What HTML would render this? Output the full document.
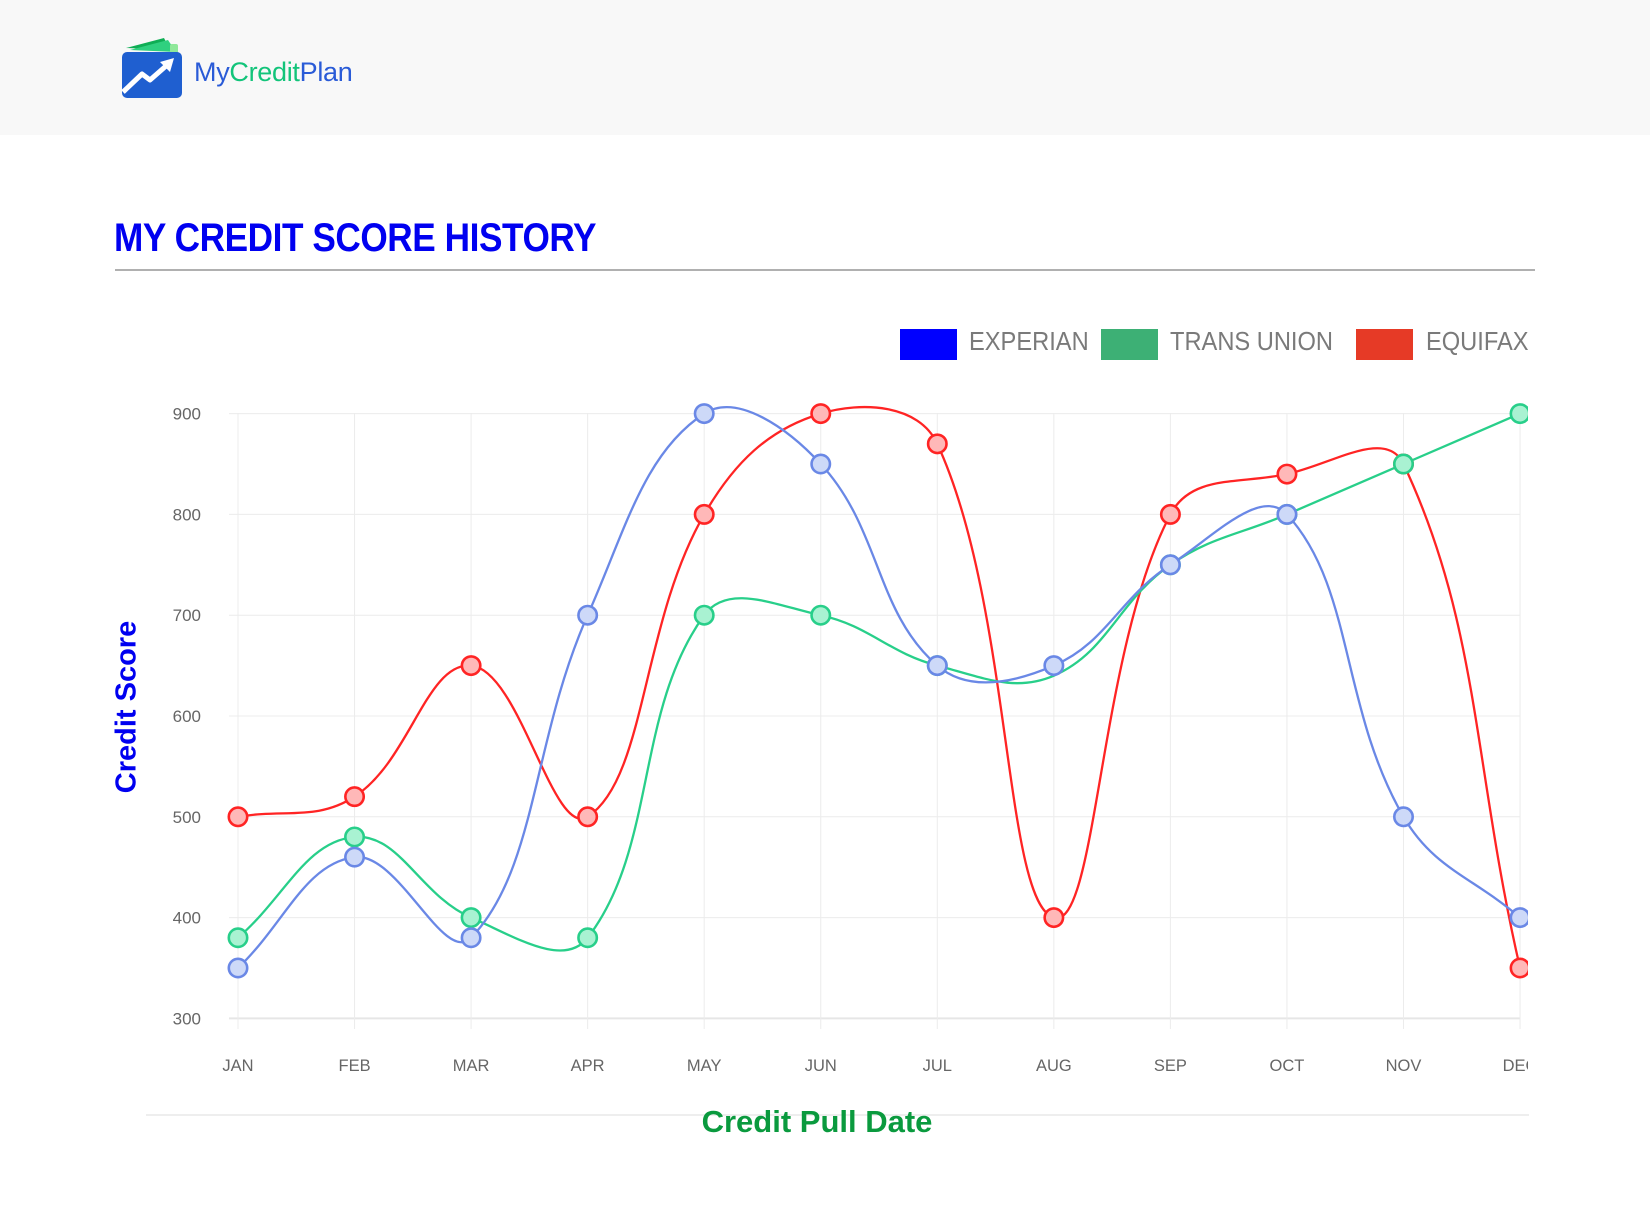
<!DOCTYPE html>
<html><head><meta charset="utf-8"><style>
html,body{margin:0;padding:0;background:#fff;width:1650px;height:1225px;overflow:hidden;font-family:"Liberation Sans",sans-serif}
.hdr{position:absolute;left:0;top:0;width:1650px;height:135px;background:#f8f8f8}
.logo-t{position:absolute;left:194px;top:57px;font-size:27px;color:#2a5bd7;letter-spacing:-0.3px}
.logo-t b{font-weight:normal;color:#12c47a}
.title{position:absolute;left:114px;top:216px;font-size:40px;font-weight:bold;color:#0000f0;letter-spacing:-0.5px;transform-origin:0 0;transform:scaleX(0.88)}
.rule{position:absolute;left:115px;top:269px;width:1420px;height:2px;background:#b0b0b0}
.leg{position:absolute;top:329px;height:31px}
.lt{position:absolute;top:326px;font-size:26px;color:#7a7a7a;transform-origin:0 0;transform:scaleX(0.91)}
.ylab{position:absolute;left:127px;top:707px;transform:translate(-50%,-50%) rotate(-90deg);font-size:29px;font-weight:bold;color:#0000f0;white-space:nowrap}
.xlab{position:absolute;left:817px;top:1122px;transform:translate(-50%,-50%);font-size:31px;font-weight:bold;color:#0a9a3e;white-space:nowrap}
.sep{position:absolute;left:146px;top:1114px;width:1383px;height:2px;background:#eee}
</style></head><body>
<div class="hdr"></div>
<svg style="position:absolute;left:120px;top:36px" width="66" height="64" viewBox="0 0 66 64">
<path d="M6 12 L44 2 L50 14 Z" fill="#0fae55"/>
<path d="M10 14 L48 4 L56 16 Z" fill="#2fd07f"/>
<rect x="50" y="8" width="8" height="12" rx="2" fill="#8fe89a"/>
<rect x="2" y="16" width="60" height="46" rx="5" fill="#1f5fd0"/>
<path d="M3 56 L22 38 L30 44 L46 30" stroke="#fff" stroke-width="5" fill="none" stroke-linejoin="round"/>
<path d="M40 26 L54 22 L50 36 Z" fill="#fff"/>
</svg>
<div class="logo-t">My<b>Credit</b>Plan</div>
<div class="title">MY CREDIT SCORE HISTORY</div>
<div class="rule"></div>
<div class="leg" style="left:900px;width:57px;background:#0000ff"></div>
<div class="lt" style="left:969px">EXPERIAN</div>
<div class="leg" style="left:1101px;width:57px;background:#3db075"></div>
<div class="lt" style="left:1170px">TRANS UNION</div>
<div class="leg" style="left:1356px;width:57px;background:#e63a26"></div>
<div class="lt" style="left:1426px">EQUIFAX</div>
<div class="ylab">Credit Score</div>
<svg id="ch" style="position:absolute;left:0;top:0" width="1528" height="1100"></svg>
<div class="sep"></div>
<div class="xlab">Credit Pull Date</div>
<script>
var svg=document.getElementById('ch'),h='';
var x0=238,dx=116.55,y900=413.6,per=100.8;
function X(i){return x0+i*dx}function Y(v){return y900+(900-v)/100*per}
for(var v=300;v<=900;v+=100){h+='<line x1="229" x2="1520" y1="'+Y(v)+'" y2="'+Y(v)+'" stroke="'+(v==300?'#e6e6e6':'#ececec')+'" stroke-width="'+(v==300?2:1)+'"/>';
h+='<text x="201" y="'+(Y(v)+6)+'" text-anchor="end" font-size="17" fill="#666" font-family="Liberation Sans">'+v+'</text>';}
var m=['JAN','FEB','MAR','APR','MAY','JUN','JUL','AUG','SEP','OCT','NOV','DEC'];
for(var i=0;i<12;i++){h+='<line x1="'+X(i)+'" x2="'+X(i)+'" y1="413" y2="1029" stroke="#ececec"/>';
h+='<text x="'+X(i)+'" y="1071" text-anchor="middle" font-size="16.5" fill="#666" font-family="Liberation Sans">'+m[i]+'</text>';}
function path(d){var p=d.map(function(v,i){return[X(i),Y(v)]}),s='M'+p[0][0]+' '+p[0][1],cp=[];
for(var i=0;i<p.length;i++){var a=p[Math.max(0,i-1)],b=p[i],c=p[Math.min(p.length-1,i+1)];
var d01=Math.hypot(b[0]-a[0],b[1]-a[1]),d12=Math.hypot(c[0]-b[0],c[1]-b[1]),t=0.4;
var fa=d01/(d01+d12||1)*t,fb=d12/(d01+d12||1)*t;
cp.push([[b[0]-fa*(c[0]-a[0]),b[1]-fa*(c[1]-a[1])],[b[0]+fb*(c[0]-a[0]),b[1]+fb*(c[1]-a[1])]]);}
for(var i=1;i<p.length;i++){s+=' C'+cp[i-1][1][0]+' '+cp[i-1][1][1]+' '+cp[i][0][0]+' '+cp[i][0][1]+' '+p[i][0]+' '+p[i][1];}
return s;}
var S=[
{d:[500,520,650,500,800,900,870,400,800,840,850,350],c:'#ff2424',f:'#ffb8b8'},
{d:[380,480,400,380,700,700,650,640,750,800,850,900],c:'#28cf8a',f:'#a9f2d2',hide:[7]},
{d:[350,460,380,700,900,850,650,650,750,800,500,400],c:'#6a88e6',f:'#cdd9f8'}];
S.forEach(function(s){h+='<path d="'+path(s.d)+'" fill="none" stroke="'+s.c+'" stroke-width="2.3"/>';});
S.forEach(function(s){s.d.forEach(function(v,i){if(s.hide&&s.hide.indexOf(i)>=0)return;
h+='<circle cx="'+X(i)+'" cy="'+Y(v)+'" r="9.2" fill="'+s.f+'" stroke="'+s.c+'" stroke-width="2.6"/>';});});
svg.innerHTML=h;
</script>
</body></html>
